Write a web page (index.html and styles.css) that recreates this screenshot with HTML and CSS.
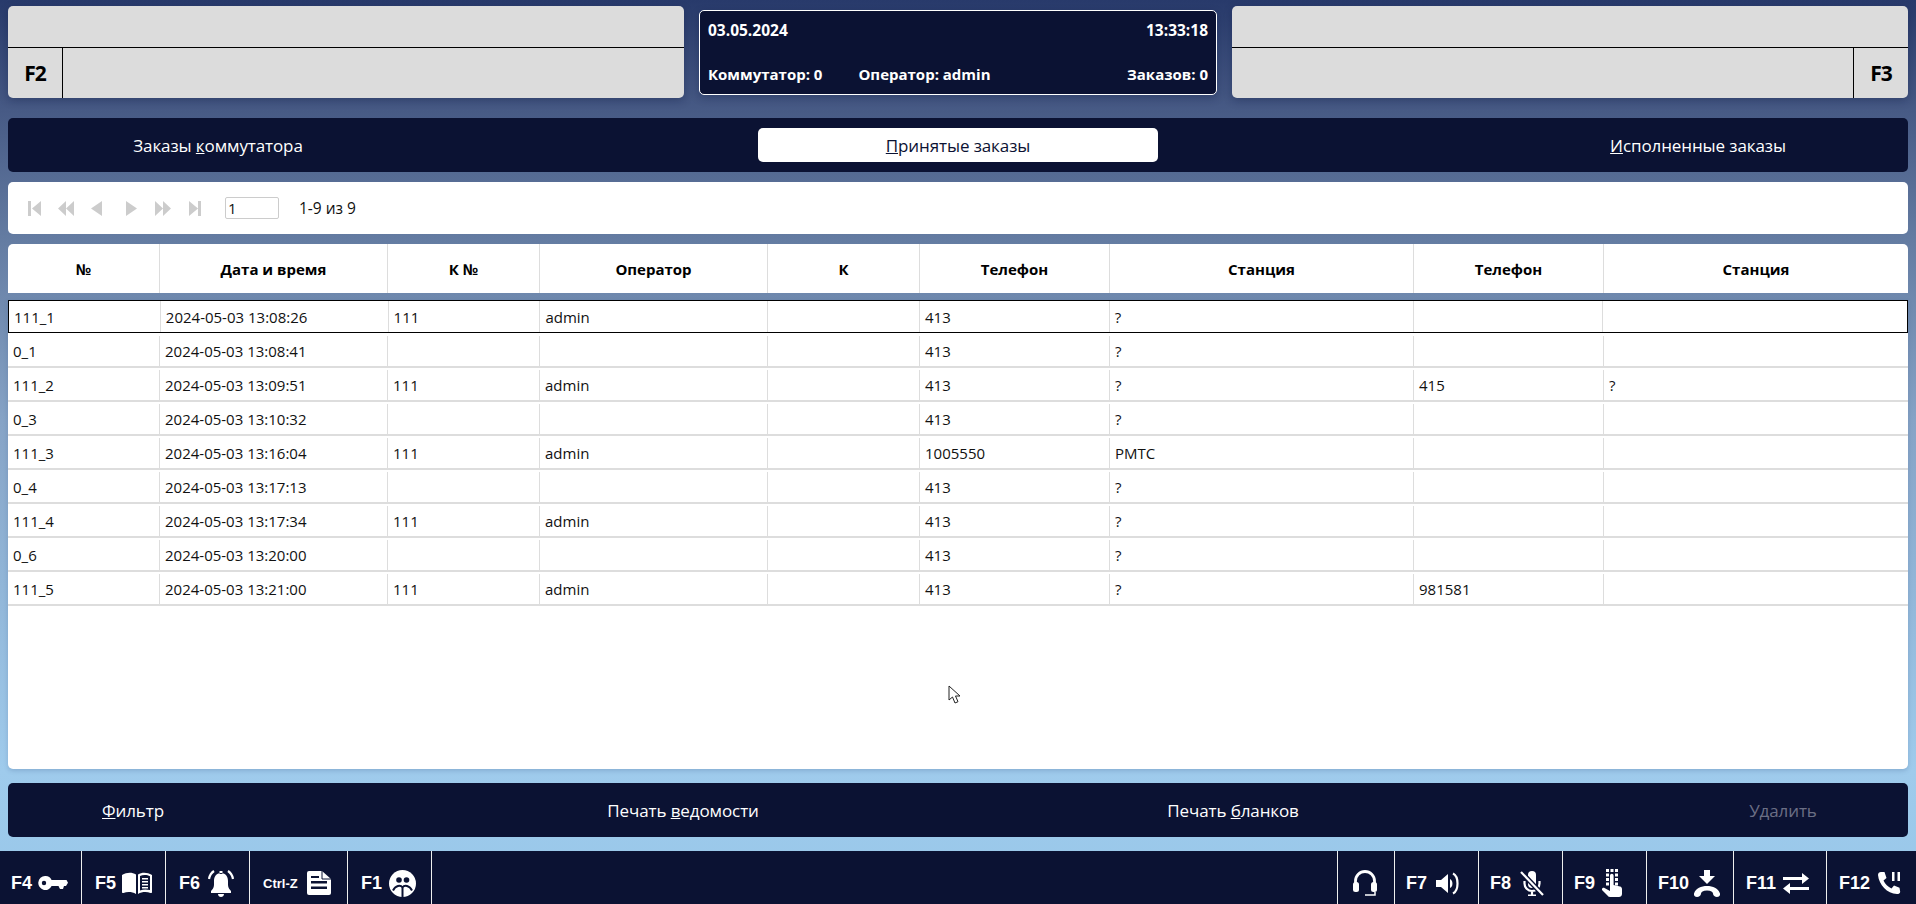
FILE: index.html
```html
<!DOCTYPE html>
<html lang="ru">
<head>
<meta charset="utf-8">
<title>Заказы</title>
<link rel="stylesheet" href="styles.css">
</head>
<body>
<main class="main">
  <section class="top">
    <div class="line-panel">
      <div class="line-top"></div>
      <div class="line-bottom"><div class="fkey fkey-left">F2</div><div class="line-fill"></div></div>
    </div>
    <div class="status">
      <div class="status-row status-row-large"><span>03.05.2024</span><span>13:33:18</span></div>
      <div class="status-row"><span class="status-left"><span>Коммутатор: 0</span><span>Оператор: admin</span></span><span>Заказов: 0</span></div>
    </div>
    <div class="line-panel">
      <div class="line-top"></div>
      <div class="line-bottom"><div class="line-fill"></div><div class="fkey fkey-right">F3</div></div>
    </div>
  </section>

  <nav class="bar tabs">
    <button class="btn"><span>Заказы <u>к</u>оммутатора</span></button>
    <button class="btn btn-active"><span><u>П</u>ринятые заказы</span></button>
    <button class="btn"><span><u>И</u>сполненные заказы</span></button>
  </nav>

  <div class="pager">
    <svg class="pg pg-a" viewBox="0 0 13 15"><path d="M0 0h3v15H0zM13 0v15L4 7.500z"/></svg>
    <svg class="pg pg-b" viewBox="0 0 16 15"><path d="M8 0v15L0 7.500zM16 0v15L8 7.500z"/></svg>
    <svg class="pg pg-c" viewBox="0 0 11 15"><path d="M11 0v15L0 7.500z"/></svg>
    <svg class="pg pg-d" viewBox="0 0 11 15"><path d="M0 0v15L11 7.500z"/></svg>
    <svg class="pg pg-e" viewBox="0 0 16 15"><path d="M0 0v15L8 7.500zM8 0v15L16 7.500z"/></svg>
    <svg class="pg pg-f" viewBox="0 0 12 15"><path d="M0 0v15L9 7.500zM9 0h3v15H9z"/></svg>
    <input class="pg-input" type="text" value="1">
    <span class="pg-text">1-9 из 9</span>
  </div>

  <div class="grid-head">
    <div>№</div><div>Дата и время</div><div>К №</div><div>Оператор</div><div>К</div><div>Телефон</div><div>Станция</div><div>Телефон</div><div>Станция</div>
  </div>

  <div class="grid-body">
    <div class="row row-selected"><div>111_1</div><div>2024-05-03 13:08:26</div><div>111</div><div>admin</div><div></div><div>413</div><div>?</div><div></div><div></div></div>
    <div class="row"><div>0_1</div><div>2024-05-03 13:08:41</div><div></div><div></div><div></div><div>413</div><div>?</div><div></div><div></div></div>
    <div class="row"><div>111_2</div><div>2024-05-03 13:09:51</div><div>111</div><div>admin</div><div></div><div>413</div><div>?</div><div>415</div><div>?</div></div>
    <div class="row"><div>0_3</div><div>2024-05-03 13:10:32</div><div></div><div></div><div></div><div>413</div><div>?</div><div></div><div></div></div>
    <div class="row"><div>111_3</div><div>2024-05-03 13:16:04</div><div>111</div><div>admin</div><div></div><div>1005550</div><div>PMTC</div><div></div><div></div></div>
    <div class="row"><div>0_4</div><div>2024-05-03 13:17:13</div><div></div><div></div><div></div><div>413</div><div>?</div><div></div><div></div></div>
    <div class="row"><div>111_4</div><div>2024-05-03 13:17:34</div><div>111</div><div>admin</div><div></div><div>413</div><div>?</div><div></div><div></div></div>
    <div class="row"><div>0_6</div><div>2024-05-03 13:20:00</div><div></div><div></div><div></div><div>413</div><div>?</div><div></div><div></div></div>
    <div class="row"><div>111_5</div><div>2024-05-03 13:21:00</div><div>111</div><div>admin</div><div></div><div>413</div><div>?</div><div>981581</div><div></div></div>
    <svg class="cursor" viewBox="0 0 13 20"><path d="M1 1v14l3.500-3 2.500 6 3-1.300-2.500-5.700H12z" fill="#fff" stroke="#222" stroke-width="1"/></svg>
  </div>

  <nav class="bar actions">
    <button class="btn btn-narrow"><span><u>Ф</u>ильтр</span></button>
    <button class="btn btn-narrow"><span>Печать <u>в</u>едомости</span></button>
    <button class="btn btn-narrow"><span>Печать <u>б</u>ланков</span></button>
    <button class="btn btn-narrow btn-disabled"><span>Удалить</span></button>
  </nav>
</main>

<footer class="footer">
  <div class="keys">
    <div class="key k82 p11 g6"><span>F4</span>
      <svg class="i30" viewBox="0 0 30 14"><path fill-rule="evenodd" d="M7 0a7 7 0 0 1 6.600 4H28.500L30 6.800 28 10h-2l-1 3h-3l-1.500-3h-6.900A7 7 0 1 1 7 0zM6 4.800a2.200 2.200 0 1 0 0 4.400 2.200 2.200 0 0 0 0-4.400z"/></svg></div>
    <div class="key k84 p13 g6"><span>F5</span>
      <svg class="i30" viewBox="0 0 30 22"><path d="M0 3C5 0 10 0 14 2.500V22C10 19.500 5 19.500 1.500 21 .5 21.300 0 20.800 0 20z"/><path fill-rule="evenodd" d="M16 2.500C20 0 25 0 30 3v17c0 .8-.5 1.300-1.500 1C25 19.500 20 19.500 16 22zM18 4v14.500c3-1.200 6-1.400 10-.5V4.300C25 2.500 21 2.500 18 4z"/><path d="M20 6h6v1.600h-6zM20 9h6v1.600h-6zM20 12h6v1.600h-6zM20 15h6v1.600h-6z"/></svg></div>
    <div class="key k84 p13 g8"><span>F6</span>
      <svg class="i26" viewBox="0 0 26 27"><path d="M13 3c-5 0-7 4-7 8v4c0 3-2 5-3 6v2h20v-2c-1-1-3-3-3-6v-4c0-4-2-8-7-8zM10 24h6c0 2-1.500 3-3 3s-3-1-3-3zM11.500 1h3v3h-3z"/><path class="st" d="M6 1C3 3 1.500 6 1 9M20 1c3 2 4.500 5 5 8"/></svg></div>
    <div class="key k98 p13 g9"><span class="small">Ctrl-Z</span>
      <svg class="i24" viewBox="0 0 24 24"><path d="M2 0h13l9 8v14a2 2 0 0 1-2 2H2a2 2 0 0 1-2-2V2a2 2 0 0 1 2-2z"/><path class="dk" d="M4 10h16v2.500H4zM4 15.500h16V18H4zM4 5h8v2H4z"/><path class="dkl" d="M15 0v8h9"/></svg></div>
    <div class="key k84 p13 g7"><span>F1</span>
      <svg class="i27" viewBox="0 0 27 27"><circle cx="13.500" cy="13.500" r="13.500"/><circle class="dk" cx="10" cy="10" r="2.800"/><circle class="dk" cx="17.500" cy="10" r="2.800"/><path class="dkl2" d="M4 20.500c2.500-5 7.500-6 9.500-3 2-3 7-2 9.500 3M13.500 17.500v9.500"/></svg></div>
  </div>
  <div class="keys keys-right">
    <div class="key k57 p15">
      <svg class="i24" viewBox="0 0 24 27"><path class="st3" d="M2.500 15v-4a9.500 9.500 0 0 1 19 0v4"/><rect x="0" y="12" width="6" height="10" rx="2.500"/><rect x="18" y="12" width="6" height="10" rx="2.500"/><path class="st15" d="M22 22v3h-10"/></svg></div>
    <div class="key k84 p11 g9"><span>F7</span>
      <svg class="i24" viewBox="0 0 24 23"><path d="M0 8h5l7-6v19l-7-6H0z"/><path d="M14 7c3 1 3.500 8 0 9z"/><path class="st" d="M17 1.500c6 3 6 17 0 20"/></svg></div>
    <div class="key k84 p11 g9"><span>F8</span>
      <svg class="i24" viewBox="0 0 24 25"><path d="M8 4a4 4 0 0 1 8 0v9a4 4 0 0 1-8 0z"/><path class="st" d="M4.500 10v2.500a7.500 7.500 0 0 0 15 0V10M12 20v5M8 24.500h8"/><path class="dkbig" d="M1 1l22 23"/><path class="st" d="M1 1l22 23"/></svg></div>
    <div class="key k84 p11 g7"><span>F9</span>
      <svg class="i20" viewBox="0 0 20 28"><path d="M4 0h3v3H4zM8.500 0h3v3h-3zM13 0h3v3h-3zM4 4.500h3v3H4zM13 4.500h3v3h-3zM4 9h3v3H4zM13 9h3v3h-3zM13 13.500h3v3h-3zM4 13.500h3v3H4z"/><path d="M8 6.500a1.800 1.800 0 0 1 3.600 0v9.500l6.400 1.500c1.300.3 2 1.300 2 2.500V25c0 2-1.500 3-3 3H8c-1.500 0-2-.7-3-2l-5-5c-.6-1 .9-3 2.500-2L8 22z"/></svg></div>
    <div class="key k87 p11 g5"><span>F10</span>
      <svg class="i26" viewBox="0 0 26 27"><path d="M10 0h6v6h5l-8 8-8-8h5z"/><path d="M0 23.500C2 18 7 16 13 16s11 2 13 7.500c.5 2-1 3.500-3 3.500s-4-1.500-4-3.500c0-1.500-2-3-6-3s-6 1.500-6 3C7 25.500 5 27 3 27S-.5 25.500 0 23.500z"/></svg></div>
    <div class="key k93 p12 g7"><span>F11</span>
      <svg class="i26" viewBox="0 0 26 21"><path d="M0 4h19V0l7 5.500L19 11V7H0zM26 14H7v-4L0 15.500 7 21v-4h19z"/></svg></div>
    <div class="key k89 p12 g8 key-last"><span>F12</span>
      <svg class="i24" viewBox="0 0 24 22"><path d="M3 0h3.500l2 6-3 2.500c1.500 3.500 4.500 6.500 8 8l2.500-3 5.500 2.200.7 4c0 1.500-1.500 2.300-3.200 2.300C9 21.500 1 13 0 3c0-1.800 1.300-3 3-3z"/><path d="M14 0h2.500v9H14zM19.500 0H22v9h-2.500z"/></svg></div>
  </div>
</footer>
</body>
</html>
```

FILE: styles.css
```css
* { box-sizing: border-box; }

html, body { height: 100%; }

body {
  margin: 0;
  height: 904px;
  display: flex;
  flex-direction: column;
  overflow: hidden;
  font-family: "Open Sans", "Noto Sans", sans-serif;
  font-size: 15px;
  color: #111;
  background: linear-gradient(180deg, #283a6b 0, #475a85 110px, #647ca2 240px, #86a3c6 420px, #9fcbec 770px, #98c7e9 100%);
}

.main {
  flex: 1;
  display: flex;
  flex-direction: column;
  padding: 6px 8px 0;
  min-height: 0;
}

/* top row */
.top {
  display: flex;
  gap: 15px;
  height: 92px;
  margin-bottom: 20px;
}

.line-panel {
  flex: 1;
  display: flex;
  flex-direction: column;
  background: #dcdcdc;
  border-radius: 5px;
  box-shadow: 0 3px 8px rgba(10, 20, 60, .3);
  overflow: hidden;
}

.line-top { height: 42px; border-bottom: 1px solid #000; }

.line-bottom { flex: 1; display: flex; }

.line-fill { flex: 1; }

.fkey {
  width: 55px;
  display: flex;
  align-items: center;
  justify-content: center;
  font-size: 21px;
  font-weight: 700;
  letter-spacing: -1px;
  color: #000;
}

.fkey-left { border-right: 1px solid #000; }
.fkey-right { border-left: 1px solid #000; }

.status {
  width: 518px;
  margin: 4px 0 3px;
  padding: 9px 8px 10px 8px;
  display: flex;
  flex-direction: column;
  justify-content: space-between;
  background: #0b1233;
  color: #fff;
  border: 1px solid #fff;
  border-radius: 5px;
  font-size: 15px;
  font-weight: 700;
  box-shadow: 0 3px 8px rgba(10, 20, 60, .3);
}

.status-row { display: flex; justify-content: space-between; line-height: 20px; }

.status-row-large { font-size: 15.500px; }

.status-left { display: flex; gap: 36px; }

/* dark bars */
.bar {
  height: 54px;
  flex: none;
  display: flex;
  justify-content: space-between;
  align-items: center;
  padding: 0 10px;
  background: #0b1233;
  border-radius: 5px;
}

.tabs { margin-bottom: 10px; }

.actions { margin-top: 14px; margin-bottom: 14px; }

.btn {
  width: 400px;
  height: 34px;
  border: 0;
  padding: 1px 0 0;
  border-radius: 5px;
  background: transparent;
  color: #fff;
  font-family: inherit;
  font-size: 17px;
  letter-spacing: -.1px;
}

.btn-narrow { width: 230px; }

.btn-active { background: #fff; color: #0b1233; }

.btn-disabled { color: #6b6f85; }

/* pager */
.pager {
  height: 52px;
  flex: none;
  display: flex;
  align-items: center;
  padding-left: 20px;
  background: #fff;
  border-radius: 5px;
  margin-bottom: 10px;
}

.pg { height: 15px; fill: #ccc; flex: none; }
.pg-a { width: 13px; }
.pg-b { width: 16px; margin-left: 17px; }
.pg-c { width: 11px; margin-left: 17px; }
.pg-d { width: 11px; margin-left: 24px; }
.pg-e { width: 16px; margin-left: 18px; }
.pg-f { width: 12px; margin-left: 18px; }

.pg-input {
  width: 54px;
  height: 22px;
  margin-left: 24px;
  padding: 0 2px;
  border: 1px solid #ccc;
  border-radius: 2px;
  font: inherit;
  color: #111;
  outline: none;
}

.pg-text { margin-left: 20px; font-size: 15.500px; }

/* grid */
.grid-head, .row {
  display: grid;
  grid-template-columns: 8fr 12fr 8fr 12fr 8fr 10fr 16fr 10fr 16fr;
}

.grid-head {
  height: 49px;
  flex: none;
  margin-bottom: 7px;
  background: #fff;
  border-radius: 5px 5px 0 0;
  font-weight: 700;
  color: #000;
}

.grid-head > div {
  display: flex;
  align-items: center;
  justify-content: center;
  border-right: 1px solid #ddd;
}

.grid-head > div:last-child { border-right: 0; }

.grid-body {
  flex: 1;
  min-height: 0;
  position: relative;
  background: #fff;
  border-radius: 0 0 5px 5px;
  box-shadow: 0 2px 4px rgba(60, 90, 140, .25);
}

.row {
  height: 34px;
  padding: 2px 0 0;
  border-bottom: 2px solid #ddd;
}

.row > div {
  display: flex;
  align-items: center;
  padding: 0 0 0 5px;
  border-right: 1px solid #ddd;
  white-space: nowrap;
  overflow: hidden;
}

.row > div:last-child { border-right: 0; }

.row-selected { border: 1.500px solid #000; padding: 0; height: 33px; margin-bottom: 1px; }
.row-selected > div { padding: 1px 0 0 5px; }

.cursor {
  position: absolute;
  left: 940px;
  top: 385px;
  width: 13px;
  height: 20px;
}

/* footer */
.footer {
  height: 53px;
  flex: none;
  display: flex;
  justify-content: space-between;
  background: #0b1233;
  color: #fff;
  font-family: "Liberation Sans", Arial, sans-serif;
  font-size: 18px;
  font-weight: 700;
}

.keys { display: flex; }

.keys-right { border-left: 1px solid #eee; }

.key {
  display: flex;
  align-items: center;
  padding-top: 11px;
  border-right: 1px solid #eee;
}

.key-last { border-right: 0; }

.k57 { width: 57px; }
.k82 { width: 82px; }
.k84 { width: 84px; }
.k87 { width: 87px; }
.k89 { width: 89px; }
.k93 { width: 93px; }
.k98 { width: 98px; }

.p11 { padding-left: 11px; }
.p12 { padding-left: 12px; }
.p13 { padding-left: 13px; }
.p15 { padding-left: 15px; }

.g5 { gap: 5px; }
.g6 { gap: 6px; }
.g7 { gap: 7px; }
.g8 { gap: 8px; }
.g9 { gap: 9px; }

.small { font-size: 13px; }

.key svg { fill: #fff; flex: none; }

.i30 { width: 30px; }
.i26 { width: 26px; }
.i24 { width: 24px; }
.i27 { width: 27px; }
.i20 { width: 20px; }

.key svg .dk { fill: #0b1233; }
.dkl { fill: none; stroke: #0b1233; stroke-width: 1; }
.dkl2 { fill: none; stroke: #0b1233; stroke-width: 2; }
.st { fill: none; stroke: #fff; stroke-width: 2.200; }
.st3 { fill: none; stroke: #fff; stroke-width: 2.800; }
.st15 { fill: none; stroke: #fff; stroke-width: 1.500; }
.dkbig { fill: none; stroke: #0b1233; stroke-width: 5; }
```
